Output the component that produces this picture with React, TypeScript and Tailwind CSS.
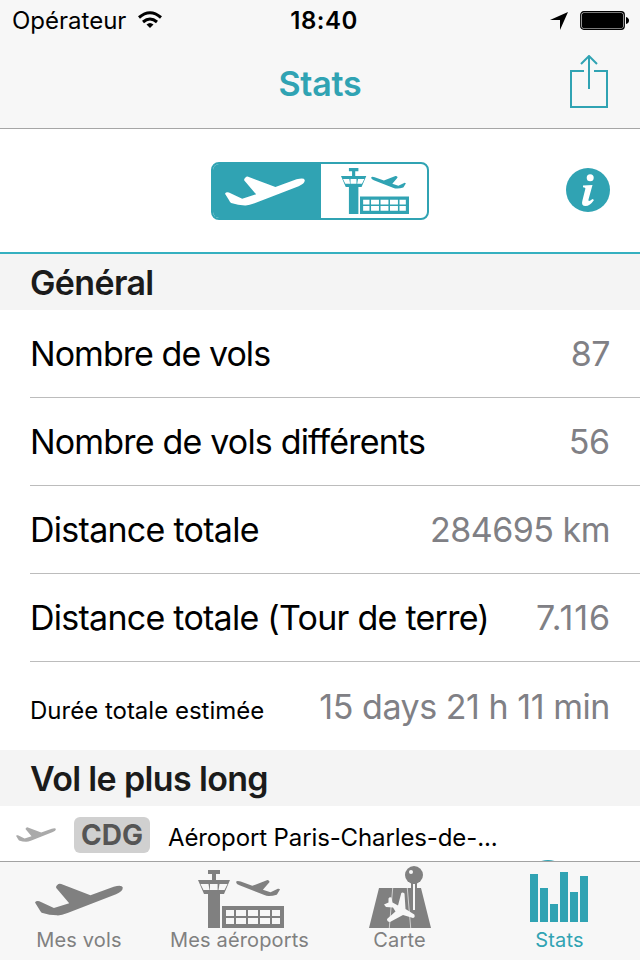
import React from 'react';

const generalStats = [
  { label: 'Nombre de vols', value: '87', labelClass: 'text-[34px] tracking-[-0.95px]', valueClass: 'tracking-[-0.5px]' },
  { label: 'Nombre de vols différents', value: '56', labelClass: 'text-[34px] tracking-[-0.82px]', valueClass: 'tracking-[-0.2px]' },
  { label: 'Distance totale', value: '284695 km', labelClass: 'text-[34px] tracking-[-0.72px]', valueClass: 'tracking-[-0.5px]' },
  { label: 'Distance totale (Tour de terre)', value: '7.116', labelClass: 'text-[34px] tracking-[-0.74px]', valueClass: 'tracking-[0.9px] -mr-px' },
  { label: 'Durée totale estimée', value: '15 days 21 h 11 min', labelClass: 'text-[24px] pt-[9px]', valueClass: 'tracking-[-0.45px]' },
];

const PLANE = 'M0 59Q3 53 13 55L57 76L103 61L64 15Q62 10 67 6Q72 0 79 3L167 37L237 11Q262 5 264 13Q266 24 244 34L98 91Q78 99 66 98Q44 98 20 90Q16 86 13 80Z';

function Plane({ className }: { className?: string }) {
  return (
    <svg viewBox="0 0 265 100" preserveAspectRatio="none" fill="currentColor" className={className}>
      <path d={PLANE} />
    </svg>
  );
}

function Airport({ className }: { className?: string }) {
  return (
    <svg viewBox="0 0 86 58" preserveAspectRatio="none" fill="currentColor" className={className}>
      {/* control tower */}
      <path
        fillRule="evenodd"
        d="M10 0h12v4h-4v6h14l-6 14h-4v34H10V24H6L0 10h14V4h-4zM2.500 14h8l1 6H5.500zM12 14h7.600v6H12zM21.500 14h8l-3 6H20.500z"
      />
      {/* terminal */}
      <path fillRule="evenodd" d="M24 36h62v22H24zM28 40v6h8v-6zM38 40v6h10v-6zM50 40v6h10v-6zM62 40v6h10v-6zM74 40v6h8v-6zM28 48v6h8v-6zM38 48v6h10v-6zM50 48v6h10v-6zM62 48v6h10v-6zM74 48v6h8v-6z" />
      <g transform="translate(82 9.700) scale(-.166 .166)">
        <path d={PLANE} />
      </g>
    </svg>
  );
}

function MapPin({ className }: { className?: string }) {
  return (
    <svg viewBox="0 0 62 62" fill="currentColor" className={className}>
      <path d="M10 22H52L62 62H0z" />
      <path d="M23.700 22L20.300 62M38.300 22L41.700 62" className="stroke-[#e4e4e4]" strokeWidth=".8" />
      <path
        className="fill-[#f7f7f7]"
        d="M32.300 27Q33.500 25.600 35.500 27.600L36.500 43L45.300 48.500Q46.500 51.500 44 52L34 49L21 56Q18 56 18 53L26.500 45.500L24 41.500L17 41L15 38.500L19.500 36.500L19.500 32.500Q20.500 30.500 22.500 31.500L23.500 36.500L29 39.500Z"
      />
      <path d="M42 17h6v5h-6z" />
      <path d="M44 18h2v26h-2z" className="fill-[#f7f7f7]" />
      <circle cx="45" cy="9" r="9" />
      <circle cx="42" cy="6" r="2" className="fill-[#f7f7f7]" />
    </svg>
  );
}

function Bars({ className }: { className?: string }) {
  return (
    <svg viewBox="0 0 58 50" fill="currentColor" className={className}>
      <path d="M0 2h8v48H0zM10 16h8v34h-8zM20 32h8v18h-8zM30 0h8v50h-8zM40 20h8v30h-8zM50 4h8v46h-8z" />
    </svg>
  );
}

function SectionHeader({ title }: { title: string }) {
  return (
    <h2 className="flex h-14 shrink-0 items-center bg-[#f4f4f4] pl-[30px] pt-[2px] text-[34px] font-semibold tracking-[-0.65px] text-[#1b1b1b]">{title}</h2>
  );
}

export default function App() {
  return (
    <div className="flex h-[960px] w-[640px] flex-col overflow-hidden bg-white font-['Inter',sans-serif] leading-none text-black whitespace-nowrap">
      <header className="h-[129px] shrink-0 border-b border-[#a6a6a6] bg-[#f7f7f7]">
        <div className="grid h-10 grid-cols-3 items-center pl-3 pr-[11px]">
          <div className="flex items-center gap-3">
            <span className="pt-[2px] text-[24px]">Opérateur</span>
            <svg viewBox="0 0 24 18" className="h-[18px] w-6" fill="none" stroke="currentColor" strokeWidth="3">
              <path d="M1 6.500Q12-3 23 6.500M5 11Q12 5 19 11" />
              <path d="M8.500 13.500Q12 10.500 15.500 13.500L12 17z" fill="currentColor" stroke="none" />
            </svg>
          </div>
          <span className="pl-[7px] pt-[2px] text-center text-[24px] font-semibold tracking-[0.5px]">18:40</span>
          <div className="flex items-center justify-end gap-3">
            <svg viewBox="0 0 18 18" className="mt-[2px] size-[18px]"><path d="M18 0L10 18V8H0z" /></svg>
            <svg viewBox="0 0 49 19" className="h-[19px] w-[49px]">
              <rect x=".75" y=".75" width="43.500" height="17.500" rx="3" fill="none" stroke="currentColor" strokeWidth="1.300" />
              <rect x="2" y="2" width="41" height="15" rx="1.500" />
              <path d="M46 6q3 1 3 3.500T46 13z" />
            </svg>
          </div>
        </div>
        <div className="grid h-[88px] grid-cols-3 items-center px-8">
          <h1 className="col-start-2 text-center text-[34px] font-semibold tracking-[-0.2px] text-[#30a3b3]">Stats</h1>
          <svg viewBox="0 0 38 53" className="mb-[5px] h-[53px] w-[38px] justify-self-end text-[#30a3b3]" fill="none" stroke="currentColor" strokeWidth="2">
            <path d="M14 16H1v36h36V16H24M19 34V1M11 9l8-8 8 8" />
          </svg>
        </div>
      </header>

      <div className="grid h-[125px] shrink-0 grid-cols-[1fr_218px_1fr] items-center border-b-2 border-[#35b0c0] text-[#30a3b3]">
        <div className="col-start-2 flex h-[58px] overflow-hidden rounded-lg border-2 border-[#30a3b3]">
          <div className="flex w-[108px] items-center justify-center bg-[#30a3b3] pr-1 text-white">
            <Plane className="h-[30px] w-20" />
          </div>
          <div className="flex flex-1 items-center justify-center pl-0.5">
            <Airport className="h-[46px] w-[68px]" />
          </div>
        </div>
        <div className="mb-[2px] mr-[30px] flex size-11 items-center justify-center justify-self-end rounded-full bg-[#30a3b3]">
          <svg viewBox="0 0 44 44" className="size-11 fill-white">
            <circle cx="24.200" cy="9.700" r="3.500" />
            <path d="M17 17.500L26.500 17L22.500 31.500Q21.800 34.500 26.500 31L28 32Q24 38 19.500 38Q15 38 16.300 33L19.300 21Q19.800 19.300 17 19.300z" />
          </svg>
        </div>
      </div>

      <SectionHeader title="Général" />
      <ul className="h-[440px] shrink-0 pl-[30px]">
        {generalStats.map((stat) => (
          <li key={stat.label} className="flex h-[88px] items-center justify-between border-b border-[#bcbcbc] pr-[30px] pt-px last:border-0">
            <span className={stat.labelClass}>{stat.label}</span>
            <span className={`text-[34px] text-[#808085] ${stat.valueClass}`}>{stat.value}</span>
          </li>
        ))}
      </ul>

      <SectionHeader title="Vol le plus long" />
      <div className="relative flex h-[55px] shrink-0 items-start overflow-hidden pl-4">
        <Plane className="mt-[21px] h-[15px] w-10 text-[#aaaaaa]" />
        <span className="ml-[18px] mt-[11px] flex h-9 w-[76px] items-center justify-center rounded-md bg-[#d0d0d0] text-[28px] font-bold text-[#555]">CDG</span>
        <span className="ml-[18px] mt-5 text-[24px] tracking-[-0.12px]">Aéroport Paris-Charles-de-...</span>
        <span className="absolute left-[526px] top-[54px] size-11 rounded-full bg-[#30a3b3]" />
      </div>

      <nav className="grid h-[99px] shrink-0 grid-cols-4 border-t border-[#a2a2a2] bg-[#f7f7f7] text-[20px] tracking-[0.15px] text-[#808080]">
        <div className="flex flex-col items-center pr-0.5">
          <div className="h-[68px] pt-[21px]"><Plane className="h-[33px] w-[88px]" /></div>
          <span>Mes vols</span>
        </div>
        <div className="flex flex-col items-center">
          <div className="h-[68px] pl-0.5 pt-2"><Airport className="h-[58px] w-[86px]" /></div>
          <span className="pr-px">Mes aéroports</span>
        </div>
        <div className="flex flex-col items-center">
          <div className="h-[68px] pt-1"><MapPin className="size-[62px]" /></div>
          <span className="pr-px">Carte</span>
        </div>
        <div className="flex flex-col items-center text-[#30a3b3]">
          <div className="h-[68px] pr-0.5 pt-2.5"><Bars className="h-[50px] w-[58px]" /></div>
          <span className="pr-px">Stats</span>
        </div>
      </nav>
    </div>
  );
}
